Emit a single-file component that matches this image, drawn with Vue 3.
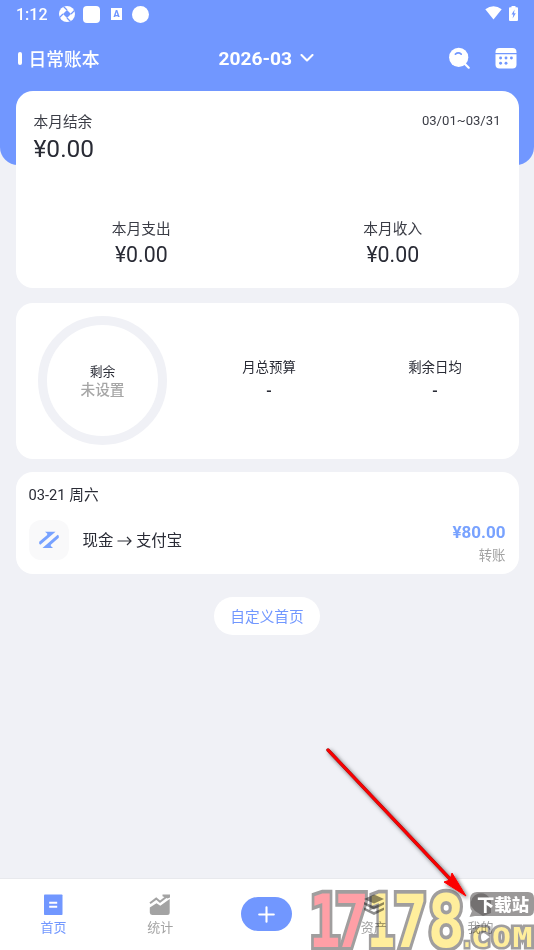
<script setup>
const digits = [
  { c: '1', x: 309, s: 0.72, fill: '#ff9fa6' },
  { c: '7', x: 334.4, s: 0.79, fill: '#ff9fa6' },
  { c: '1', x: 367, s: 0.64, fill: '#ffee9c' },
  { c: '7', x: 393, s: 0.79, fill: '#ffee9c' },
  { c: '8', x: 427.5, s: 0.85, fill: '#ffee9c' }
]
const letters = [
  { c: '.', x: 461, w: 12 },
  { c: 'C', x: 471, w: 19 },
  { c: 'O', x: 492, w: 19 },
  { c: 'M', x: 512.5, w: 20 }
]
</script>

<template>
  <div class="page">
    <header class="header">
      <div class="status">
        <span class="clock">1:12</span>
        <svg class="s-ring" viewBox="0 0 16 16"><circle cx="8" cy="8" r="8" fill="#fff" /><path d="M8 4 12 8 8 12 4 8Z" fill="#7197ff" /><path d="M4.500.5 8 4M15.500 4.500 12 8M11.500 15.500 8 12M.5 11.500 4 8" stroke="#7197ff" stroke-width="1.300" /></svg>
        <i class="s-square"></i>
        <span class="s-letter">A</span>
        <i class="s-circle"></i>
        <svg class="s-wifi" viewBox="0 0 17 14"><path d="M.3 3.300Q8.500-3 16.700 3.300L8.500 13.500Z" fill="#fff" /></svg>
        <svg class="s-battery" viewBox="0 0 9 15"><path d="M2.500 1.300V0h4v1.300H8a1 1 0 0 1 1 1V14a1 1 0 0 1-1 1H1a1 1 0 0 1-1-1V2.300a1 1 0 0 1 1-1Z" fill="#fff" /><path d="M5.600 3.500 2.500 8.500h1.800L3.600 12.500 6.800 7.300H5Z" fill="#7197ff" /></svg>
      </div>
      <div class="titlebar">
        <div class="book"><i></i><span>日常账本</span></div>
        <div class="month">
          <span>2026-03</span>
          <svg width="14" height="9" viewBox="0 0 14 9"><path d="M1.500 1 7 6.500 12.500 1" fill="none" stroke="#fff" stroke-width="2.100" stroke-linecap="round" stroke-linejoin="round" /></svg>
        </div>
        <div class="tools">
          <svg width="22" height="22" viewBox="0 0 22 22"><circle cx="10.700" cy="10.400" r="9.600" fill="#fff" /><path d="M17 17 20.700 20.700" stroke="#fff" stroke-width="2.200" stroke-linecap="round" /><path d="M7.400 7.100Q10.300 4.700 13.200 7.100" fill="none" stroke="#7197ff" stroke-width="1.700" stroke-linecap="round" /></svg>
          <svg width="22" height="22" viewBox="0 0 22 22"><path d="M.5 6.100V5A4 4 0 0 1 4.500 1h13a4 4 0 0 1 4 4v1.100Z" fill="#fff" /><path d="M.5 7.300h21V17.500a4 4 0 0 1-4 4h-13a4 4 0 0 1-4-4Z" fill="#fff" /><g fill="#7197ff"><circle cx="5.600" cy="11" r="1.450" /><circle cx="11" cy="11" r="1.450" /><circle cx="16.400" cy="11" r="1.450" /><circle cx="5.600" cy="16.200" r="1.450" /><circle cx="11" cy="16.200" r="1.450" /></g></svg>
        </div>
      </div>
    </header>

    <main class="content">
      <section class="card summary">
        <div class="summary-top">
          <div><div class="label">本月结余</div><div class="balance">¥0.00</div></div>
          <div class="range">03/01~03/31</div>
        </div>
        <div class="flows">
          <div><div class="label">本月支出</div><div class="amount">¥0.00</div></div>
          <div><div class="label">本月收入</div><div class="amount">¥0.00</div></div>
        </div>
      </section>

      <section class="card budget">
        <div class="ring"><span>剩余</span><b>未设置</b></div>
        <div class="metric"><span>月总预算</span><b>-</b></div>
        <div class="metric"><span>剩余日均</span><b>-</b></div>
      </section>

      <section class="card day">
        <div class="date">03-21 周六</div>
        <div class="record">
          <div class="rec-icon">
            <svg width="20" height="18" viewBox="0 0 20 18"><g fill="#78a2ff"><path d="M6 .7H16.500L14.500 2.400 1.300 13.800.2 12.800V10.800L8.200 3.900V2.600Z" /><path d="M14 16.900H3.500L5.500 15.200 18.700 3.800 19.800 4.800V6.800L11.800 13.700V15Z" /></g></svg>
          </div>
          <div class="rec-name">现金 <svg class="to" viewBox="0 0 15 10"><path d="M.5 5H14M10 1 14 5 10 9" fill="none" stroke="#30323a" stroke-width="1.200" /></svg> 支付宝</div>
          <div class="rec-value"><b>¥80.00</b><span>转账</span></div>
        </div>
      </section>

      <button class="custom">自定义首页</button>
    </main>

    <nav class="nav">
      <div class="tab active">
        <svg width="22" height="22" viewBox="0 0 22 22"><rect x="2" y=".5" width="18.500" height="20.500" rx=".8" fill="#7197ff" /><path d="M7.200 8.700h8M7.200 12.700h8" stroke="#fff" stroke-width="2" /></svg>
        <span>首页</span>
      </div>
      <div class="tab">
        <svg width="22" height="22" viewBox="0 0 22 22"><path d="M.8 13.500 7.500 9.300 11.300 11.700 20.700 5V18.500a2.500 2.500 0 0 1-2.500 2.500h-15A2.500 2.500 0 0 1 .8 18.500Z" fill="#a3a3a3" /><path d="M1 9.200 7.200 4.600 11 7.800 17.800 2.500" fill="none" stroke="#a3a3a3" stroke-width="2" /><path d="M13.500.5H21V3.500L18.500 4.500 13.500 2.200Z" fill="#a3a3a3" /></svg>
        <span>统计</span>
      </div>
      <div class="add"><svg width="17" height="17" viewBox="0 0 17 17"><path d="M8.500 1.200V15.800M1.200 8.500H15.800" stroke="#fff" stroke-width="2.100" stroke-linecap="round" /></svg></div>
      <div class="tab">
        <svg width="22" height="22" viewBox="0 0 22 22"><path d="M11 .5 21 5 11 9.500 1 5Z" fill="#8f8f8f" /><path d="M1 8 11 12.500 21 8V10.500L11 15.500 1 10.500ZM1 13.500 11 18 21 13.500V16L11 21 1 16Z" fill="#8f8f8f" /></svg>
        <span>资产</span>
      </div>
      <div class="tab">
        <svg width="22" height="22" viewBox="0 0 22 22"><circle cx="11" cy="10.500" r="10.200" fill="#a3a3a3" /></svg>
        <span>我的</span>
      </div>
    </nav>

    <svg class="overlay mark" width="534" height="950" viewBox="0 0 534 950">
      <text v-for="(d, i) in digits" :key="'d' + i" class="digit" :fill="d.fill" :transform="`translate(${d.x} 946.5) scale(${d.s} 1)`">{{ d.c }}</text>
      <text v-for="(d, i) in letters" :key="'l' + i" class="letter" :x="d.x" y="947" :textLength="d.w" lengthAdjust="spacingAndGlyphs">{{ d.c }}</text>
    </svg>
    <svg class="overlay" width="534" height="950" viewBox="0 0 534 950">
      <defs>
        <filter id="shade" x="-10%" y="-10%" width="125%" height="125%"><feDropShadow dx="2" dy="2" stdDeviation="2" flood-color="#000" flood-opacity=".6" /></filter>
      </defs>
      <path d="M477 892H528Q534 892 534 898V910Q534 916 528 916H475L469.500 917 472 911Q470 909 470 904V898Q471 892 477 892Z" fill="#9b9999" />
      <path d="M471 906A10 10 0 0 1 491 901V913L483 916 475 911Z" fill="#656363" opacity=".75" />
      <text class="station" x="477" y="911" textLength="52" lengthAdjust="spacingAndGlyphs">下载站</text>
      <g filter="url(#shade)">
        <path d="M328 750 451 880" stroke="#8c1014" stroke-width="3.400" stroke-linecap="round" />
        <path d="M328 750 451 880" stroke="#fb0505" stroke-width="2.600" stroke-linecap="round" />
        <path d="M466 896 444 882 450 880 452 873Z" fill="#fb0505" stroke="#fb0505" stroke-width="1" />
      </g>
    </svg>
  </div>
</template>

<style>
body { margin: 0; background: #f0f1f6; }
</style>

<style scoped>
* { box-sizing: border-box; }
.page { position: relative; width: 534px; height: 950px; overflow: hidden; display: flex; flex-direction: column; background: #f0f1f6; color: #292b35; font-family: Roboto, "Noto Sans CJK SC", sans-serif; }
.header { flex: none; height: 165px; background: #7197ff; border-radius: 0 0 18px 18px; color: #fff; }
.status { height: 28px; display: flex; align-items: center; padding: 0 16px 0 16px; }
.clock { width: 43px; font-size: 16px; font-weight: 500; }
.s-ring { width: 16px; height: 16px; }
.s-square { width: 17px; height: 17px; margin-left: 8px; border-radius: 4px; background: #fff; }
.s-letter { width: 11px; height: 12px; margin-left: 11px; background: #fff; color: #7197ff; font-size: 9px; line-height: 12px; font-weight: 900; text-align: center; }
.s-circle { width: 17px; height: 17px; margin-left: 10px; border-radius: 50%; background: #fff; }
.s-wifi { width: 17px; height: 14px; margin: -2px 0 0 auto; }
.s-battery { width: 9px; height: 15px; margin: -2px 0 0 7px; }
.titlebar { height: 60px; display: grid; grid-template-columns: 1fr 98px 1fr; align-items: center; padding: 0 17px 0 18px; }
.book { display: flex; align-items: center; gap: 6.500px; font-size: 17.800px; font-weight: 500; line-height: 26px; }
.book span { padding-top: 3px; }
.book i { width: 4px; height: 13px; border-radius: 2px; background: #fff; }
.month { display: flex; align-items: center; gap: 8px; font-size: 19.200px; font-weight: 700; line-height: 24px; white-space: nowrap; }
.month span { padding-top: 2px; }
.tools { display: flex; justify-content: flex-end; gap: 25px; }
.content { flex: 1; display: flex; flex-direction: column; align-items: center; margin-top: -74px; }
.card { width: 503px; background: #fff; border-radius: 17px; }
.summary { height: 197px; padding: 20px 18px 0; }
.summary-top { display: flex; justify-content: space-between; height: 107px; }
.label { font-size: 14.700px; line-height: 23px; color: #3b3d46; }
.balance { font-size: 24.500px; line-height: 29px; }
.range { font-size: 13.100px; line-height: 20px; color: #3b3d46; }
.flows { display: grid; grid-template-columns: 1fr 1fr; margin: 0 -18px; text-align: center; }
.amount { font-size: 21.300px; line-height: 27px; }
.budget { height: 156px; margin-top: 15px; padding: 0 1px 0 4px; display: grid; grid-template-columns: repeat(3, 1fr); align-items: center; justify-items: center; }
.ring { width: 129px; height: 129px; margin-top: -1px; border: 9px solid #f0f1f6; border-radius: 50%; display: flex; flex-direction: column; align-items: center; justify-content: center; font-size: 12.800px; line-height: 19px; }
.ring b { font-size: 14.700px; font-weight: 500; color: #a6a6a6; }
.metric { display: flex; flex-direction: column; align-items: center; font-size: 13.400px; line-height: 23px; margin-top: -4px; padding-left: 1px; }
.metric b { font-size: 16px; font-weight: 500; }
.day { height: 102px; margin-top: 13px; padding: 12px 13px 0; }
.date { font-size: 14.700px; line-height: 22px; }
.record { display: flex; align-items: center; margin-top: 13px; height: 41px; }
.rec-icon { width: 40px; height: 40px; border-radius: 12px; background: #f9f9fa; display: flex; align-items: center; justify-content: center; }
.rec-name { margin-left: 14px; padding-top: 2px; font-size: 15.400px; line-height: 24px; }
.to { width: 15px; height: 10px; }
.rec-value { margin-left: auto; display: flex; flex-direction: column; align-items: flex-end; line-height: 23px; font-size: 13.400px; color: #a3a3a3; margin-top: 10px; }
.rec-value b { font-size: 17px; font-weight: 700; color: #78a2ff; }
.rec-value span { line-height: 24px; }
.custom { width: 106px; height: 38px; margin-top: 23px; padding: 2px 0 0; border: 0; border-radius: 19px; background: #fff; color: #7197ff; font: 14.700px/36px Roboto, "Noto Sans CJK SC", sans-serif; }
.nav { flex: none; height: 72px; display: grid; grid-template-columns: repeat(5, 1fr); background: #fff; border-top: 1px solid #e8e9ed; }
.tab { display: flex; flex-direction: column; align-items: center; padding-top: 15px; font-size: 13px; line-height: 22px; color: #a3a3a3; }
.tab.active { color: #7197ff; }
.tab span { margin-top: 1px; }
.add { width: 51px; height: 34px; margin-top: 18px; justify-self: center; border-radius: 17px; background: #7197ff; display: flex; align-items: center; justify-content: center; }
.overlay { position: absolute; left: 0; top: 0; pointer-events: none; }
.mark { mix-blend-mode: multiply; }
.digit { font: 700 73px "DejaVu Sans Mono", monospace; stroke: #a09e9e; stroke-width: 7.500; paint-order: stroke; stroke-linejoin: miter; }
.letter { font: 700 27px "DejaVu Sans Mono", monospace; fill: #ffee9c; stroke: #a09e9e; stroke-width: 5; paint-order: stroke; stroke-linejoin: miter; }
.station { font: 900 17px "Noto Sans CJK SC", sans-serif; fill: #fff; }
</style>
